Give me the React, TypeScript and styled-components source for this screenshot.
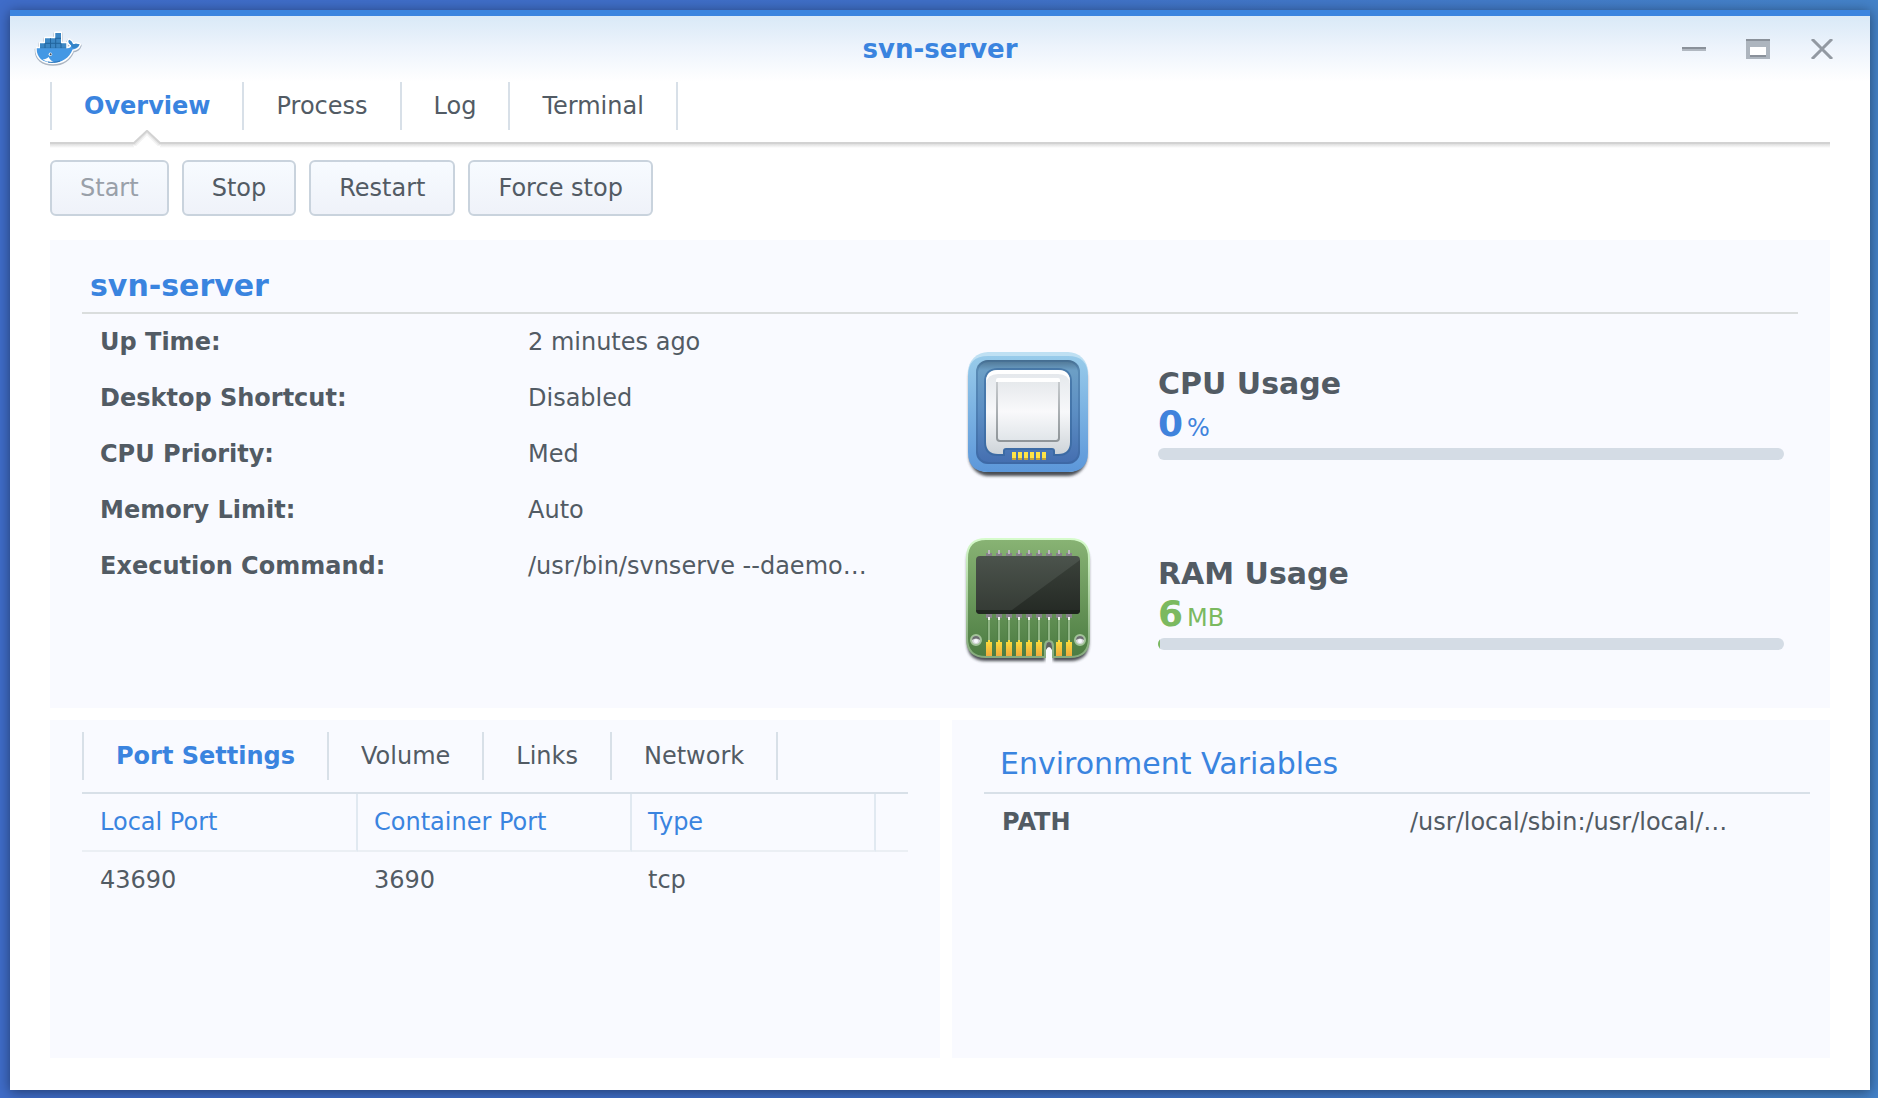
import React, { useState } from 'react';
import styled, { createGlobalStyle } from 'styled-components';

const color = {
  blue: '#3a84df',
  text: '#525b64',
  muted: '#99a0a9',
  green: '#7bb960',
  line: '#d8e0e8',
  panel: '#f9faff',
};

const GlobalStyle = createGlobalStyle`
  *, *::before, *::after { box-sizing: border-box; }
  body {
    margin: 0;
    font-family: 'DejaVu Sans', Verdana, sans-serif;
    font-size: 24px;
    line-height: 28px;
    color: ${color.text};
  }
  button { font: inherit; color: inherit; margin: 0; }
`;

const Desktop = styled.div`
  display: flex;
  min-height: 100vh;
  padding: 10px 8px 8px 10px;
  background: linear-gradient(90deg, #3f6cc8, #3f6fc6 50%, #4482c8);
`;

const Window = styled.main`
  flex: 1;
  min-width: 0;
  display: flex;
  flex-direction: column;
  background: #fff;
  border-top: 6px solid ${color.blue};
  box-shadow: 0 2px 12px rgba(0, 0, 0, 0.45);
`;

const TitleBar = styled.header`
  display: grid;
  grid-template-columns: 1fr auto 1fr;
  align-items: center;
  height: 66px;
  padding: 0 36px 0 24px;
  background: linear-gradient(#d9e9f7, #eef4fc 50%, #fff);
`;

const Title = styled.h1`
  margin: 0;
  padding-left: 12px;
  font-size: 26px;
  line-height: 28px;
  color: ${color.blue};
`;

const Controls = styled.div`
  display: flex;
  justify-content: flex-end;
  gap: 40px;
`;

const ControlButton = styled.button`
  display: flex;
  padding: 0;
  border: 0;
  background: none;
`;

const Body = styled.div`
  flex: 1;
  display: flex;
  flex-direction: column;
  padding: 0 40px 32px;
`;

const MainTabs = styled.nav`
  padding-bottom: 12px;
`;

const TabList = styled.div`
  display: flex;
  border-left: 2px solid ${color.line};
  width: max-content;
`;

const Tab = styled.button<{ $active: boolean }>`
  position: relative;
  height: 48px;
  padding: 0 32px;
  border: 0;
  border-right: 2px solid ${color.line};
  background: none;
  white-space: nowrap;
  font-weight: ${(p) => (p.$active ? 700 : 400)};
  color: ${(p) => (p.$active ? color.blue : color.text)};
`;

const Notch = styled.svg`
  position: absolute;
  top: 48px;
  left: 50%;
  margin-left: -14px;
`;

const TabLine = styled.div`
  height: 6px;
  background: linear-gradient(#d2d2d2 2px, #dedede 2px, #fff);
`;

const Toolbar = styled.div`
  display: flex;
  gap: 13px;
  padding: 12px 0 24px;
`;

const ActionButton = styled.button`
  height: 56px;
  padding: 0 28px;
  border: 2px solid #c9d3dd;
  border-radius: 6px;
  background: linear-gradient(#f7fbff, #eff2f9);
  white-space: nowrap;
  &:disabled { color: ${color.muted}; }
`;

const Panel = styled.section`
  min-width: 0;
  background: ${color.panel};
`;

const Summary = styled(Panel)`
  padding: 20px 32px 42px;
`;

const SummaryTitle = styled.h2`
  margin: 0;
  padding: 12px 8px;
  border-bottom: 2px solid #dadddd;
  font-size: 30px;
  line-height: 28px;
  color: ${color.blue};
`;

const SummaryBody = styled.div`
  display: grid;
  grid-template-columns: 882fr 834fr;
`;

const Details = styled.dl`
  margin: 0;
  padding: 0 18px;
`;

const DetailRow = styled.div<{ $label: number }>`
  display: grid;
  grid-template-columns: ${(p) => p.$label}px 1fr;
  align-items: center;
  height: 56px;
  white-space: nowrap;
`;

const Term = styled.dt`
  font-weight: 700;
`;

const Value = styled.dd`
  margin: 0;
`;

const Meters = styled.div`
  display: grid;
  gap: 62px;
  padding: 34px 14px 0 0;
`;

const MeterRow = styled.div`
  display: flex;
  align-items: center;
  gap: 66px;
`;

const Meter = styled.div`
  flex: 1;
`;

const MeterTitle = styled.h3`
  margin: 0;
  font-size: 30px;
  line-height: 40px;
`;

const Reading = styled.p<{ $color: string }>`
  display: flex;
  align-items: baseline;
  gap: 4px;
  margin: 0 0 4px;
  color: ${(p) => p.$color};
`;

const Amount = styled.strong`
  font-size: 36px;
  line-height: 40px;
`;

const Track = styled.div`
  height: 12px;
  border-radius: 6px;
  overflow: hidden;
  background: #d4dce5;
`;

const Fill = styled.div<{ $color: string }>`
  height: 12px;
  background: ${(p) => p.$color};
`;

const Lower = styled.div`
  flex: 1;
  display: grid;
  grid-template-columns: 890fr 878fr;
  gap: 12px;
  margin-top: 12px;
`;

const PortPanel = styled(Panel)`
  padding: 12px 32px;
`;

const PortTable = styled.table`
  width: 100%;
  margin-top: 12px;
  table-layout: fixed;
  border-collapse: separate;
  border-spacing: 0;
  border-top: 2px solid ${color.line};
  text-align: left;
`;

const HeadCell = styled.th`
  height: 58px;
  padding: 0 0 0 16px;
  border-right: 2px solid #e1e9f1;
  border-bottom: 2px solid #ebeff4;
  font-weight: 400;
  color: ${color.blue};
  &:first-child { padding-left: 18px; }
  &:last-child { border-right: 0; }
`;

const Cell = styled.td`
  height: 56px;
  padding: 0 0 0 16px;
  &:first-child { padding-left: 18px; }
`;

const EnvPanel = styled(Panel)`
  padding: 16px 20px 16px 32px;
`;

const EnvTitle = styled.h2`
  margin: 0;
  padding: 14px 16px;
  border-bottom: 2px solid ${color.line};
  font-size: 30px;
  line-height: 28px;
  font-weight: 400;
  color: ${color.blue};
`;

const DockerLogo = () => {
  const body =
    'M2.7 17.3H33.4C36 17.2 37.6 15.6 37 14C34.6 12.6 34 10.6 35 8.8C37.4 9.8 38.6 11.6 38.8 13.3C41 12.4 43.8 12.5 45.6 13.6C44.6 16.6 42 18.4 38.6 18.5C35.2 27 28 31.8 19 31.8C9 31.8 2.4 27 2.7 17.3Z';
  const boxes = 'M6 17.3V12.3H11V7.3H21.3V2H27V12.3H32.3V17.3Z';
  return (
    <svg width="50" height="36" viewBox="0 0 50 36" role="img" aria-label="Docker">
      <g opacity=".45" fill="#54657a" stroke="#54657a" strokeWidth="4" strokeLinejoin="round">
        <path d={body} transform="translate(0 1)" />
        <path d={boxes} transform="translate(0 1)" />
      </g>
      <g fill="#fff" stroke="#fff" strokeWidth="3" strokeLinejoin="round">
        <path d={body} />
        <path d={boxes} />
      </g>
      <path d={boxes} fill="#3b86c4" />
      <path
        d="M11 12.3H27M11 12.3V17.3M16.5 7.3V17.3M21.7 7.3V17.3M27 12.3V17.3M21.3 7.3H27M6 17.3H32"
        stroke="#22649d"
        strokeWidth="1"
        fill="none"
      />
      <path d={body} fill="#4498e4" />
      <path d="M37 14C34.6 12.6 34 10.6 35 8.8C37.4 9.8 38.6 11.6 38.8 13.3C41 12.4 43.8 12.5 45.6 13.6C44 16.2 42 17.4 38.6 17.2Z" fill="#3484c8" />
      <path d="M8.6 28.3C11 28.3 13 27.4 14.6 26C15.6 28 17.4 30 20 31.2C15.6 31.6 11.6 30.6 8.6 28.3Z" fill="#fff" />
      <path d="M14 31C17 31.6 22 31.6 26 30" stroke="#2c72b4" strokeWidth="1" fill="none" />
      <circle cx="16.4" cy="23.2" r="1.7" fill="#fff" />
      <circle cx="16.6" cy="23.2" r="1" fill="#37485a" />
    </svg>
  );
};

const CpuIcon = () => (
  <svg width="128" height="128" viewBox="0 0 128 128" overflow="visible" aria-hidden="true">
    <defs>
      <linearGradient id="cpuCase" x2="0" y2="1">
        <stop stopColor="#98cbea" />
        <stop offset="1" stopColor="#5c97da" />
      </linearGradient>
      <linearGradient id="cpuWell" x2="0" y2="1">
        <stop stopColor="#4e7491" />
        <stop offset=".1" stopColor="#6c9fc6" />
        <stop offset=".5" stopColor="#5c8ec3" />
        <stop offset="1" stopColor="#446eb0" />
      </linearGradient>
      <linearGradient id="cpuDie" x2="0" y2="1">
        <stop stopColor="#e3e7eb" />
        <stop offset=".5" stopColor="#f7f8fa" />
        <stop offset="1" stopColor="#ced4d9" />
      </linearGradient>
      <linearGradient id="cpuPlate" x2="0" y2="1">
        <stop stopColor="#e6e9ec" />
        <stop offset=".5" stopColor="#f9f9fb" />
        <stop offset="1" stopColor="#e0e5e9" />
      </linearGradient>
      <linearGradient id="cpuEdge" x2="0" y2="1">
        <stop stopColor="#c6cacd" />
        <stop offset="1" stopColor="#8f9599" />
      </linearGradient>
      <filter id="cpuSoft" x="-10%" y="-10%" width="120%" height="120%">
        <feGaussianBlur stdDeviation="1.6" />
      </filter>
    </defs>
    <rect x="5" y="10" width="118" height="118" rx="20" fill="#2c2f35" opacity=".85" filter="url(#cpuSoft)" />
    <rect x="4" y="4" width="120" height="120" rx="20" fill="#bfe0f3" />
    <path d="M4 28Q4 8 24 8H104Q124 8 124 28V104Q124 124 104 124H24Q4 124 4 104Z" fill="url(#cpuCase)" />
    <rect x="12" y="12" width="104" height="104" rx="12" fill="url(#cpuWell)" />
    <rect x="13" y="13" width="102" height="102" rx="11" fill="none" stroke="#2f5c8d" strokeOpacity=".3" strokeWidth="2" />
    <path
      d="M34 22H94Q106 22 106 34V94Q106 106 94 106H91V103Q91 100 88 100H42Q39 100 39 103V106H34Q22 106 22 94V34Q22 22 34 22Z"
      fill="url(#cpuDie)"
      stroke="#336499"
      strokeOpacity=".6"
      strokeWidth="4"
      paintOrder="stroke"
    />
    <path d="M22 34Q22 22 34 22H94Q106 22 106 34V36Q105 26 94 26H34Q23 26 22 36Z" fill="#fff" />
    <rect x="32" y="30" width="64" height="8" rx="2" fill="#fff" />
    <path d="M33 34H95V90Q95 93 92 93H36Q33 93 33 90Z" fill="url(#cpuPlate)" />
    <path d="M33 34V90Q33 93 36 93H92Q95 93 95 90V34" fill="none" stroke="url(#cpuEdge)" strokeWidth="2" />
    {[0, 1, 2, 3, 4, 5].map((n) => (
      <g key={n}>
        <rect x={48 + n * 6} y="104" width="4" height="6" fill="#ffe346" />
        <rect x={48 + n * 6} y="110" width="4" height="2" fill="#c2a13b" />
      </g>
    ))}
  </svg>
);

const RamIcon = () => {
  const board =
    'M22 1H106Q125 1 125 20V100Q125 119 106 119H89V108Q89 103 85 103Q81 103 81 108V119H22Q3 119 3 100V20Q3 1 22 1Z';
  return (
    <svg width="128" height="128" viewBox="0 0 128 128" aria-hidden="true">
      <defs>
        <linearGradient id="ramBoard" x2="0" y2="1">
          <stop stopColor="#88b374" />
          <stop offset="1" stopColor="#4c7c42" />
        </linearGradient>
        <linearGradient id="ramRim" x2="0" y2="1">
          <stop stopColor="#d6fbcb" />
          <stop offset=".4" stopColor="#b4d9a9" />
          <stop offset="1" stopColor="#86aa7d" />
        </linearGradient>
        <linearGradient id="ramChip" x2="0" y2="1">
          <stop stopColor="#4b534c" />
          <stop offset="1" stopColor="#343a34" />
        </linearGradient>
        <linearGradient id="ramShade" x2="0" y2="1">
          <stop stopColor="#3a413a" />
          <stop offset="1" stopColor="#242924" />
        </linearGradient>
        <linearGradient id="ramGold" x2="0" y2="1">
          <stop stopColor="#fbdf3c" />
          <stop offset="1" stopColor="#f3aa3c" />
        </linearGradient>
        <filter id="ramSoft" x="-10%" y="-10%" width="120%" height="120%">
          <feGaussianBlur stdDeviation="1.5" />
        </filter>
      </defs>
      <path d={board} transform="translate(0 4)" fill="#2c2f35" opacity=".85" filter="url(#ramSoft)" />
      <path d={board} fill="url(#ramBoard)" stroke="url(#ramRim)" strokeWidth="2" />
      <path d="M82 128V109Q82 104 85 104Q88 104 88 109V128Z" fill="#f9faff" />
      <path d="M82 112V109Q82 104 85 104Q88 104 88 109V112Q85 106 82 112Z" fill="#5f6460" />
      {[0, 1, 2, 3, 4, 5, 6, 7, 8].map((n) => {
        const x = 22 + n * 10;
        return (
          <g key={n}>
            <rect x={x} y="15" width="6" height="4" fill="#86808a" />
            <rect x={x + 2} y="12" width="2" height="4" fill="#bcb9be" />
            <rect x={x} y="76" width="6" height="4" fill="#86808a" />
            <rect x={x + 2} y="80" width="2" height="22" fill="#8fb584" />
            <rect x={x + 1} y="80" width="1" height="22" fill="#4d7b45" opacity=".6" />
            <rect x={x + 2} y="79" width="2" height="3" fill="#eef2ec" />
            {n !== 6 && <path d={`M${x} 118V104H${x + 2}V102H${x + 4}V104H${x + 6}V118Z`} fill="url(#ramGold)" />}
          </g>
        );
      })}
      <rect x="12" y="18" width="104" height="58" rx="4" fill="url(#ramChip)" />
      <path d="M116 22V72Q116 76 112 76H44L48 72Z" fill="url(#ramShade)" />
      <path d="M12 72H116Q116 76 112 76H16Q12 76 12 72Z" fill="#1b231b" opacity=".75" />
      {[12, 116].map((cx) => (
        <g key={cx}>
          <circle cx={cx} cy="102" r="5" fill="#d8dadb" stroke="#a3c39a" strokeWidth="2" />
          <path d={`M${cx - 4} 102A4 4 0 0 1 ${cx + 4} 102Q${cx} 99 ${cx - 4} 102Z`} fill="#6c6f70" />
          <circle cx={cx} cy="103" r="2" fill="#f9faff" />
        </g>
      ))}
    </svg>
  );
};

const NotchMark = () => (
  <Notch width="28" height="18" viewBox="0 0 28 18" aria-hidden="true">
    <path d="M1 18V13L14 0L27 13V18Z" fill="#fff" />
    <path d="M0 15H3L14 4L25 15H28" fill="none" stroke="#f4f4f4" strokeWidth="2" />
    <path d="M0 14H2L14 2L26 14H28" fill="none" stroke="#e6e6e6" strokeWidth="2" />
    <path d="M0 13H1L14 0.8L27 13H28" fill="none" stroke="#d2d2d2" strokeWidth="2" />
  </Notch>
);

const mainTabs = ['Overview', 'Process', 'Log', 'Terminal'];
const portTabs = ['Port Settings', 'Volume', 'Links', 'Network'];

const details = [
  ['Up Time:', '2 minutes ago'],
  ['Desktop Shortcut:', 'Disabled'],
  ['CPU Priority:', 'Med'],
  ['Memory Limit:', 'Auto'],
  ['Execution Command:', '/usr/bin/svnserve --daemo…'],
];

const meters = [
  { title: 'CPU Usage', amount: '0', unit: '%', tone: '#4083dc', fill: 0, icon: <CpuIcon /> },
  { title: 'RAM Usage', amount: '6', unit: 'MB', tone: color.green, fill: 0.3, icon: <RamIcon /> },
];

export default function App() {
  const [tab, setTab] = useState('Overview');
  const [portTab, setPortTab] = useState('Port Settings');

  return (
    <>
      <GlobalStyle />
      <Desktop>
        <Window>
          <TitleBar>
            <DockerLogo />
            <Title>svn-server</Title>
            <Controls>
              <ControlButton aria-label="Minimize">
                <svg width="24" height="20" viewBox="0 0 24 20">
                  <path d="M0 8H24V10H0Z" fill="#8a919a" />
                  <path d="M0 10H24V12H0Z" fill="#b1b8c1" />
                </svg>
              </ControlButton>
              <ControlButton aria-label="Maximize">
                <svg width="24" height="20" viewBox="0 0 24 20">
                  <path d="M0 0H24V20H0ZM4 8V18H20V8Z" fill="#adb5be" fillRule="evenodd" />
                  <path d="M0 0H24V2H0ZM4 16H20V18H4Z" fill="#8a919a" />
                  <path d="M4 8H20V16H4Z" fill="#fff" />
                </svg>
              </ControlButton>
              <ControlButton aria-label="Close">
                <svg width="24" height="20" viewBox="0 0 24 20">
                  <path d="M2 0L22 20M22 0L2 20" stroke="#9299a2" strokeWidth="3" />
                </svg>
              </ControlButton>
            </Controls>
          </TitleBar>
          <Body>
            <MainTabs>
              <TabList role="tablist">
                {mainTabs.map((name) => (
                  <Tab key={name} role="tab" aria-selected={tab === name} $active={tab === name} onClick={() => setTab(name)}>
                    {name}
                    {tab === name && <NotchMark />}
                  </Tab>
                ))}
              </TabList>
            </MainTabs>
            <TabLine />
            <Toolbar>
              <ActionButton disabled>Start</ActionButton>
              <ActionButton>Stop</ActionButton>
              <ActionButton>Restart</ActionButton>
              <ActionButton>Force stop</ActionButton>
            </Toolbar>
            <Summary>
              <SummaryTitle>svn-server</SummaryTitle>
              <SummaryBody>
                <Details>
                  {details.map(([label, value]) => (
                    <DetailRow key={label} $label={428}>
                      <Term>{label}</Term>
                      <Value>{value}</Value>
                    </DetailRow>
                  ))}
                </Details>
                <Meters>
                  {meters.map((m) => (
                    <MeterRow key={m.title}>
                      {m.icon}
                      <Meter>
                        <MeterTitle>{m.title}</MeterTitle>
                        <Reading $color={m.tone}>
                          <Amount>{m.amount}</Amount>
                          <span>{m.unit}</span>
                        </Reading>
                        <Track>
                          <Fill $color={m.tone} style={{ width: `${m.fill}%` }} />
                        </Track>
                      </Meter>
                    </MeterRow>
                  ))}
                </Meters>
              </SummaryBody>
            </Summary>
            <Lower>
              <PortPanel>
                <TabList role="tablist">
                  {portTabs.map((name) => (
                    <Tab key={name} role="tab" aria-selected={portTab === name} $active={portTab === name} onClick={() => setPortTab(name)}>
                      {name}
                    </Tab>
                  ))}
                </TabList>
                <PortTable>
                  <colgroup>
                    <col style={{ width: '276px' }} />
                    <col style={{ width: '274px' }} />
                    <col style={{ width: '244px' }} />
                    <col />
                  </colgroup>
                  <thead>
                    <tr>
                      <HeadCell>Local Port</HeadCell>
                      <HeadCell>Container Port</HeadCell>
                      <HeadCell>Type</HeadCell>
                      <HeadCell aria-hidden="true" />
                    </tr>
                  </thead>
                  <tbody>
                    <tr>
                      <Cell>43690</Cell>
                      <Cell>3690</Cell>
                      <Cell>tcp</Cell>
                      <Cell />
                    </tr>
                  </tbody>
                </PortTable>
              </PortPanel>
              <EnvPanel>
                <EnvTitle>Environment Variables</EnvTitle>
                <Details>
                  <DetailRow $label={408}>
                    <Term>PATH</Term>
                    <Value>/usr/local/sbin:/usr/local/…</Value>
                  </DetailRow>
                </Details>
              </EnvPanel>
            </Lower>
          </Body>
        </Window>
      </Desktop>
    </>
  );
}
